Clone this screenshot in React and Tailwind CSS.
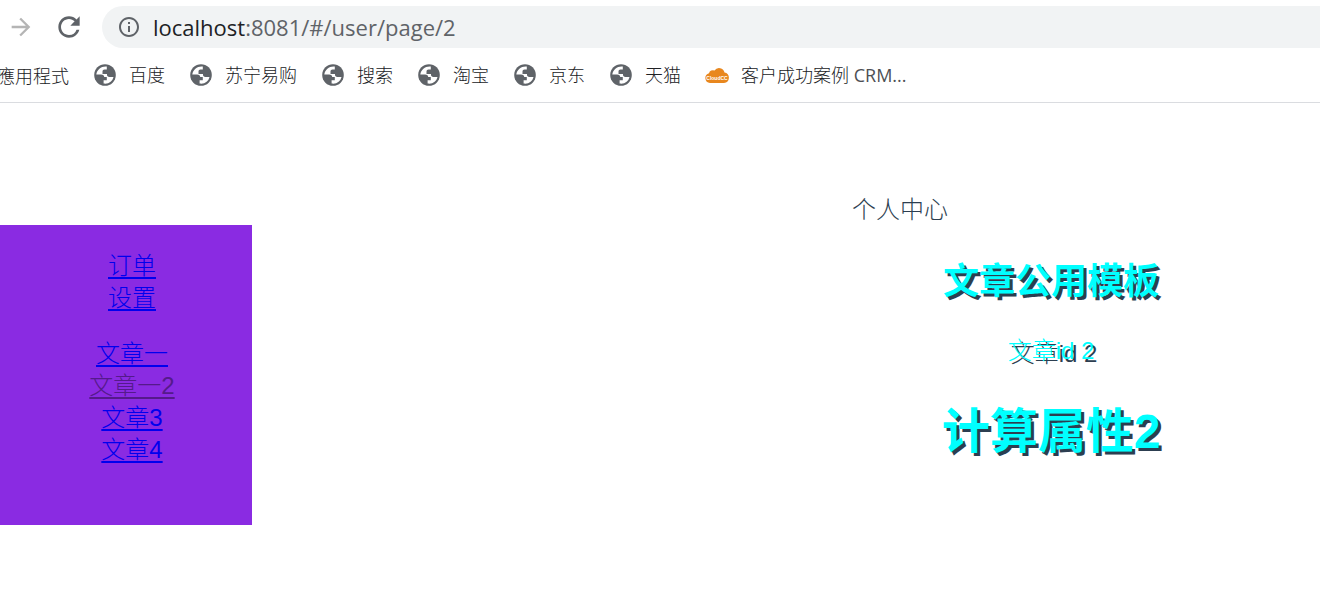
import { MdArrowForward, MdRefresh, MdInfoOutline } from "react-icons/md";

const bookmarks = ["百度", "苏宁易购", "搜索", "淘宝", "京东", "天猫"];

const orderLinks = ["订单", "设置"];
const articleLinks = [
  { label: "文章一", id: 1 },
  { label: "文章一2", id: 2 },
  { label: "文章3", id: 3 },
  { label: "文章4", id: 4 },
];

function Globe() {
  return (
    <svg viewBox="0 0 24 24" className="size-6 shrink-0" aria-hidden="true">
      <circle cx="12" cy="12" r="10.8" fill="#5f6368" />
      <path
        d="M13.800 3.600C8.500 3 4 6.500 3.300 11.400H8c2.200 0 3.200 1 3.200 2.600h2.600v3.200h-3.200v3.300c4.800.9 9-2.200 9.900-6.500h-4.200c-1.400 0-2.300-.9-2.300-2.200v-.9H9.500V8.500c0-1.200.8-2 2-2h2.300Z"
        fill="#fff"
      />
    </svg>
  );
}

function Cloud() {
  return (
    <svg viewBox="0 0 24 16" className="h-4 w-6 shrink-0" aria-hidden="true">
      <path
        d="M5 16a5 5 0 0 1-1-9.800A4 4 0 0 1 9.500 3.500 5.500 5.500 0 0 1 19.500 5.500 5.300 5.300 0 0 1 19 16Z"
        fill="#e8871e"
      />
      <text x="12" y="13" textAnchor="middle" fontSize="5" fontWeight="700" fill="#fff" fontFamily="Liberation Sans, sans-serif">
        CloudCC
      </text>
    </svg>
  );
}

export default function App() {
  return (
    <div className="min-h-screen overflow-hidden bg-white font-['Liberation_Sans','Noto_Sans_CJK_SC',sans-serif]">
      <header className="border-b border-[#dadce0] font-['Open_Sans','Noto_Sans_CJK_SC',sans-serif]">
        <div className="flex items-center pt-1.5 pl-[7px]">
          <button type="button" aria-label="Forward" className="mr-[18px] text-[#b5b5b5]">
            <MdArrowForward className="size-7" />
          </button>
          <button type="button" aria-label="Reload" className="mr-[17px] text-[#5f6368]">
            <MdRefresh className="size-8" />
          </button>
          <div className="flex h-[42px] grow items-center gap-3 rounded-l-full bg-[#f1f3f4] pl-[15px] text-[22px]">
            <MdInfoOutline className="size-6 text-[#5f6368]" />
            <p className="text-[#5f6368]">
              <span className="text-[#202124]">localhost</span>:8081/#/user/page/2
            </p>
          </div>
        </div>
        <nav className="flex h-[54px] items-center gap-6 text-lg font-light whitespace-nowrap text-[#202124]">
          <a href="#/apps" className="-ml-[27px] pl-6 font-['Noto_Sans_CJK_TC',sans-serif]">應用程式</a>
          {bookmarks.map((label) => (
            <a key={label} href="#/bookmark" className="flex items-center gap-3">
              <Globe />
              {label}
            </a>
          ))}
          <a href="#/crm" className="flex items-center gap-3">
            <Cloud />
            <span>
              客户成功案例 <span className="font-normal text-[#4d5054]">CRM...</span>
            </span>
          </a>
        </nav>
      </header>

      <div className="flex pt-[91px] text-2xl leading-8 font-light">
        <nav className="mt-[31px] h-[300px] w-[252px] shrink-0 bg-[#8a2be2] pt-[25px] pl-3 text-center text-[#0000ee]">
          <ul>
            {orderLinks.map((label) => (
              <li key={label}>
                <a href="#/user" className="underline decoration-2 underline-offset-3">{label}</a>
              </li>
            ))}
          </ul>
          <ul className="mt-6">
            {articleLinks.map(({ label, id }) => (
              <li key={id}>
                <a
                  href={`#/user/page/${id}`}
                  className={id === 2 ? "text-[#551a8b] underline decoration-2 underline-offset-3" : "underline decoration-2 underline-offset-3"}
                >
                  {label}
                </a>
              </li>
            ))}
          </ul>
        </nav>
        <main className="grow pl-[228px] text-center text-[#2c3e50]">
          <p>个人中心</p>
          <article className="ml-[302px] text-[#00ffff] [text-shadow:3px_3px_#2c3e50]">
            <h2 className="mt-9 text-4xl font-bold">文章公用模板</h2>
            <p className="mt-[33px]">文章id 2</p>
            <h1 className="mt-[41px] text-5xl font-bold">计算属性2</h1>
          </article>
        </main>
      </div>
    </div>
  );
}
